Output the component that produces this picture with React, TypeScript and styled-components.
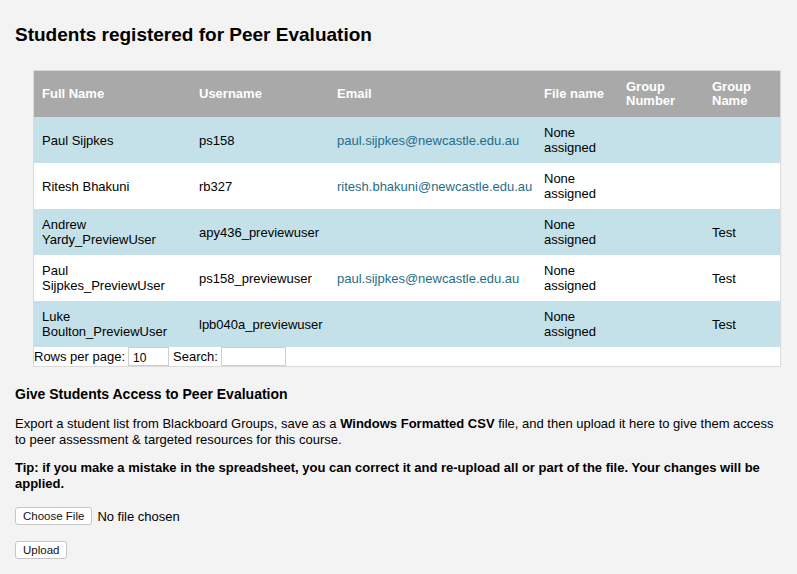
import React from "react";
import styled, { createGlobalStyle } from "styled-components";

const GlobalStyle = createGlobalStyle`
  html, body { margin: 0; padding: 0; background: #f3f3f3; }
  body { font-family: "Liberation Sans", Arial, Helvetica, sans-serif; color: #000; }
`;

const Page = styled.div`
  padding: 23px 15px 20px 15px;
`;

const Title = styled.h1`
  margin: 0;
  font-size: 19px;
  line-height: 24px;
  font-weight: bold;
`;

const TableBox = styled.div`
  margin: 23px 0 0 18px;
  width: 746px;
  border: 1px solid #dadada;
  background: #fff;
`;

const Table = styled.table`
  width: 746px;
  border-collapse: collapse;
  table-layout: fixed;
  font-size: 13px;
`;

const Th = styled.th<{ $w: number }>`
  width: ${(p) => p.$w}px;
  height: 46px;
  padding: 0 8px;
  background: #a9a9a9;
  color: #fff;
  text-align: left;
  vertical-align: middle;
  font-weight: bold;
  line-height: 14px;
  box-sizing: border-box;
`;

const Row = styled.tr<{ $alt: boolean }>`
  background: ${(p) => (p.$alt ? "#c4e0e8" : "#fff")};
`;

const Td = styled.td`
  height: 46px;
  padding: 0 8px;
  vertical-align: middle;
  line-height: 15px;
  box-sizing: border-box;
`;

const Mail = styled.a`
  color: #1f6e88;
  text-decoration: none;
`;

const Footer = styled.div`
  display: flex;
  align-items: center;
  height: 19px;
  font-size: 13px;
`;

const FooterLabel = styled.span`
  margin-right: 3px;
`;

const SmallInput = styled.input<{ $w: number }>`
  width: ${(p) => p.$w}px;
  height: 19px;
  box-sizing: border-box;
  border: 1px solid #cfcfcf;
  background: #fff;
  font-family: "Liberation Sans", Arial, sans-serif;
  font-size: 12px;
  padding: 2px 4px 0 4px;
  margin: 0 4px 0 0;
  outline: none;
`;

const Heading = styled.h2`
  margin: 18px 0 0 0;
  font-size: 14px;
  line-height: 18px;
  font-weight: bold;
`;

const Para = styled.p<{ $bold?: boolean }>`
  margin: 13px 0 0 0;
  font-size: 13px;
  line-height: 15.5px;
  font-weight: ${(p) => (p.$bold ? "bold" : "normal")};
  max-width: 767px;
`;

const FileRow = styled.div`
  display: flex;
  align-items: center;
  gap: 5px;
  margin-top: 16px;
  font-size: 13px;
`;

const Button = styled.button`
  height: 18px;
  box-sizing: border-box;
  border: 1px solid #c6c6c6;
  border-radius: 3px;
  background: #fff;
  font-family: "Liberation Sans", Arial, sans-serif;
  font-size: 11.5px;
  color: #111;
  padding: 0 7px;
  line-height: 16px;
`;

const UploadWrap = styled.div`
  margin-top: 15px;
`;

const cols: [string, number][] = [
  ["Full Name", 157],
  ["Username", 138],
  ["Email", 207],
  ["File name", 82],
  ["Group Number", 86],
  ["Group Name", 76],
];

const rows = [
  { name: "Paul Sijpkes", user: "ps158", email: "paul.sijpkes@newcastle.edu.au", group: "" },
  { name: "Ritesh Bhakuni", user: "rb327", email: "ritesh.bhakuni@newcastle.edu.au", group: "" },
  { name: "Andrew Yardy_PreviewUser", user: "apy436_previewuser", email: "", group: "Test" },
  { name: "Paul Sijpkes_PreviewUser", user: "ps158_previewuser", email: "paul.sijpkes@newcastle.edu.au", group: "Test" },
  { name: "Luke Boulton_PreviewUser", user: "lpb040a_previewuser", email: "", group: "Test" },
];

export default function App() {
  return (
    <Page>
      <GlobalStyle />
      <Title>Students registered for Peer Evaluation</Title>
      <TableBox>
        <Table>
          <thead>
            <tr>
              {cols.map(([label, w]) => (
                <Th key={label} $w={w}>{label}</Th>
              ))}
            </tr>
          </thead>
          <tbody>
            {rows.map((r, i) => (
              <Row key={i} $alt={i % 2 === 0}>
                <Td>{r.name}</Td>
                <Td>{r.user}</Td>
                <Td>{r.email && <Mail href="#">{r.email}</Mail>}</Td>
                <Td>None assigned</Td>
                <Td></Td>
                <Td>{r.group}</Td>
              </Row>
            ))}
          </tbody>
        </Table>
        <Footer>
          <FooterLabel>Rows per page:</FooterLabel>
          <SmallInput $w={41} defaultValue="10" />
          <FooterLabel>Search:</FooterLabel>
          <SmallInput $w={65} />
        </Footer>
      </TableBox>
      <Heading>Give Students Access to Peer Evaluation</Heading>
      <Para>
        Export a student list from Blackboard Groups, save as a <b>Windows Formatted CSV</b> file, and then upload it here to give them access to peer assessment &amp; targeted resources for this course.
      </Para>
      <Para $bold>
        Tip: if you make a mistake in the spreadsheet, you can correct it and re-upload all or part of the file. Your changes will be applied.
      </Para>
      <FileRow>
        <Button>Choose File</Button>
        <span>No file chosen</span>
      </FileRow>
      <UploadWrap>
        <Button>Upload</Button>
      </UploadWrap>
    </Page>
  );
}
